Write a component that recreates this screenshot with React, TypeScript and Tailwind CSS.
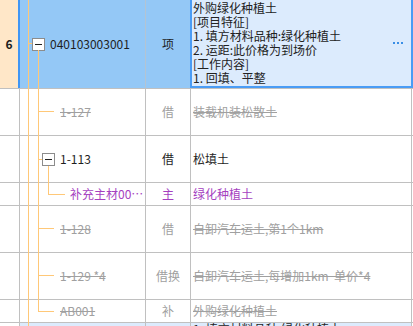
const LINE = "absolute bg-[#ffc878]";

const Box = () => (
  <div className="w-[13px] h-[13px] shrink-0 border border-[#8c8c8c] bg-white flex items-center justify-center">
    <div className="w-[7px] h-px bg-[#222]" />
  </div>
);

const Row = ({ h, children, className = "" }: any) => (
  <div className={`flex border-b border-[#c0c0c0] ${h} ${className}`}>{children}</div>
);

const Num = ({ children, className = "" }: any) => (
  <div className={`w-[20px] shrink-0 border-r border-[#c0c0c0] ${className}`}>{children}</div>
);

const Type = ({ children, className = "" }: any) => (
  <div className={`w-[45px] shrink-0 border-r border-[#c0c0c0] flex items-center justify-center ${className}`}>
    {children}
  </div>
);

const Name = ({ children, className = "" }: any) => (
  <div className={`w-[221px] shrink-0 border-r border-[#c0c0c0] flex items-center pl-[2px] whitespace-pre ${className}`}>
    {children}
  </div>
);

const gray = "text-[#a0a0a0] line-through";
const purple = "text-[#a53fbf]";

export default function App() {
  return (
    <div className="w-[413px] h-[326px] overflow-hidden bg-white text-[12px] leading-[14px] text-[#1e1e1e] font-['Noto_Sans_CJK_SC',sans-serif]">
      {/* selected row */}
      <Row h="h-[89px]">
        <div className="w-[20px] shrink-0 bg-[#ffe7c8] border-r-2 border-[#4096f5] flex items-center justify-center font-bold">
          6
        </div>
        <div className="relative w-[126px] shrink-0 bg-[#94c8f6] border-r border-[#b4c4d2] flex items-center pl-[12px] gap-[5px]">
          <span className={`${LINE} left-[8px] top-0 -bottom-px w-px`} />
          <span className={`${LINE} left-[8px] top-[43px] w-[4px] h-px`} />
          <span className={`${LINE} left-[18px] top-[50px] -bottom-px w-px`} />
          <Box />
          <span>040103003001</span>
        </div>
        <div className="w-[44px] shrink-0 bg-[#94c8f6] flex items-center justify-center">项</div>
        <div className="relative w-[223px] shrink-0 bg-[#dcebfd] border-x-2 border-b-2 border-[#4a9cf5] pl-px pt-px text-[#222]">
          <div>外购绿化种植土</div>
          <div>[项目特征]</div>
          <div>1. 填方材料品种:绿化种植土</div>
          <div>2. 运距:此价格为到场价</div>
          <div>[工作内容]</div>
          <div>1. 回填、平整</div>
          <div className="absolute left-[201px] top-[42px] flex gap-[2px]">
            <span className="w-[2px] h-[2px] bg-[#3a8ee6]" />
            <span className="w-[2px] h-[2px] bg-[#3a8ee6]" />
            <span className="w-[2px] h-[2px] bg-[#3a8ee6]" />
          </div>
        </div>
      </Row>

      {/* 1-127 */}
      <Row h="h-[47px]">
        <Num />
        <div className={`relative w-[126px] shrink-0 border-r border-[#c0c0c0] flex items-center pl-[40px] ${gray}`}>
          <span className={`${LINE} left-[8px] top-0 -bottom-px w-px`} />
          <span className={`${LINE} left-[18px] top-0 -bottom-px w-px`} />
          <span className={`${LINE} left-[18px] top-[22px] w-[16px] h-px`} />
          1-127
        </div>
        <Type className="text-[#a0a0a0]">借</Type>
        <Name className={gray}>装载机装松散土</Name>
      </Row>

      {/* 1-113 */}
      <Row h="h-[47px]">
        <Num />
        <div className="relative w-[126px] shrink-0 border-r border-[#c0c0c0] flex items-center pl-[22px] gap-[5px]">
          <span className={`${LINE} left-[8px] top-0 -bottom-px w-px`} />
          <span className={`${LINE} left-[18px] top-0 -bottom-px w-px`} />
          <span className={`${LINE} left-[18px] top-[23px] w-[4px] h-px`} />
          <span className={`${LINE} left-[28px] top-[30px] -bottom-px w-px`} />
          <Box />
          <span>1-113</span>
        </div>
        <Type>借</Type>
        <Name>松填土</Name>
      </Row>

      {/* 补充主材 */}
      <Row h="h-[23px]">
        <Num />
        <div className={`relative w-[126px] shrink-0 border-r border-[#c0c0c0] flex items-center pl-[50px] ${purple}`}>
          <span className={`${LINE} left-[8px] top-0 -bottom-px w-px`} />
          <span className={`${LINE} left-[18px] top-0 -bottom-px w-px`} />
          <span className={`${LINE} left-[28px] top-0 h-[12px] w-px`} />
          <span className={`${LINE} left-[28px] top-[11px] w-[17px] h-px`} />
          补充主材00…
        </div>
        <Type className={purple}>主</Type>
        <Name className={purple}>绿化种植土</Name>
      </Row>

      {/* 1-128 */}
      <Row h="h-[47px]">
        <Num />
        <div className={`relative w-[126px] shrink-0 border-r border-[#c0c0c0] flex items-center pl-[40px] ${gray}`}>
          <span className={`${LINE} left-[8px] top-0 -bottom-px w-px`} />
          <span className={`${LINE} left-[18px] top-0 -bottom-px w-px`} />
          <span className={`${LINE} left-[18px] top-[22px] w-[16px] h-px`} />
          1-128
        </div>
        <Type className="text-[#a0a0a0]">借</Type>
        <Name className={gray}>自卸汽车运土,第1个1km</Name>
      </Row>

      {/* 1-129 */}
      <Row h="h-[47px]">
        <Num />
        <div className={`relative w-[126px] shrink-0 border-r border-[#c0c0c0] flex items-center pl-[40px] whitespace-pre ${gray}`}>
          <span className={`${LINE} left-[8px] top-0 -bottom-px w-px`} />
          <span className={`${LINE} left-[18px] top-0 -bottom-px w-px`} />
          <span className={`${LINE} left-[18px] top-[22px] w-[16px] h-px`} />
          1-129 *4
        </div>
        <Type className="text-[#a0a0a0]">借换</Type>
        <Name className={gray}>自卸汽车运土,每增加1km  单价*4</Name>
      </Row>

      {/* AB001 */}
      <Row h="h-[23px]">
        <Num />
        <div className={`relative w-[126px] shrink-0 border-r border-[#c0c0c0] flex items-center pl-[40px] ${gray}`}>
          <span className={`${LINE} left-[8px] top-0 -bottom-px w-px`} />
          <span className={`${LINE} left-[18px] top-0 h-[12px] w-px`} />
          <span className={`${LINE} left-[18px] top-[11px] w-[16px] h-px`} />
          AB001
        </div>
        <Type className="text-[#a0a0a0]">补</Type>
        <Name className={gray}>外购绿化种植土</Name>
      </Row>

      {/* next row, partly visible */}
      <Row h="h-[47px]">
        <Num />
        <div className="relative w-[126px] shrink-0 bg-[#dcebfd] border-r border-[#c0c0c0]">
          <span className={`${LINE} left-[8px] top-0 bottom-0 w-px`} />
        </div>
        <div className="w-[45px] shrink-0 bg-[#dcebfd] border-r border-[#c0c0c0]" />
        <div className="w-[221px] shrink-0 bg-[#dcebfd] border-r border-[#c0c0c0] pl-[2px] leading-[12px]">
          1. 填方材料品种:绿化种植土
        </div>
      </Row>
    </div>
  );
}
